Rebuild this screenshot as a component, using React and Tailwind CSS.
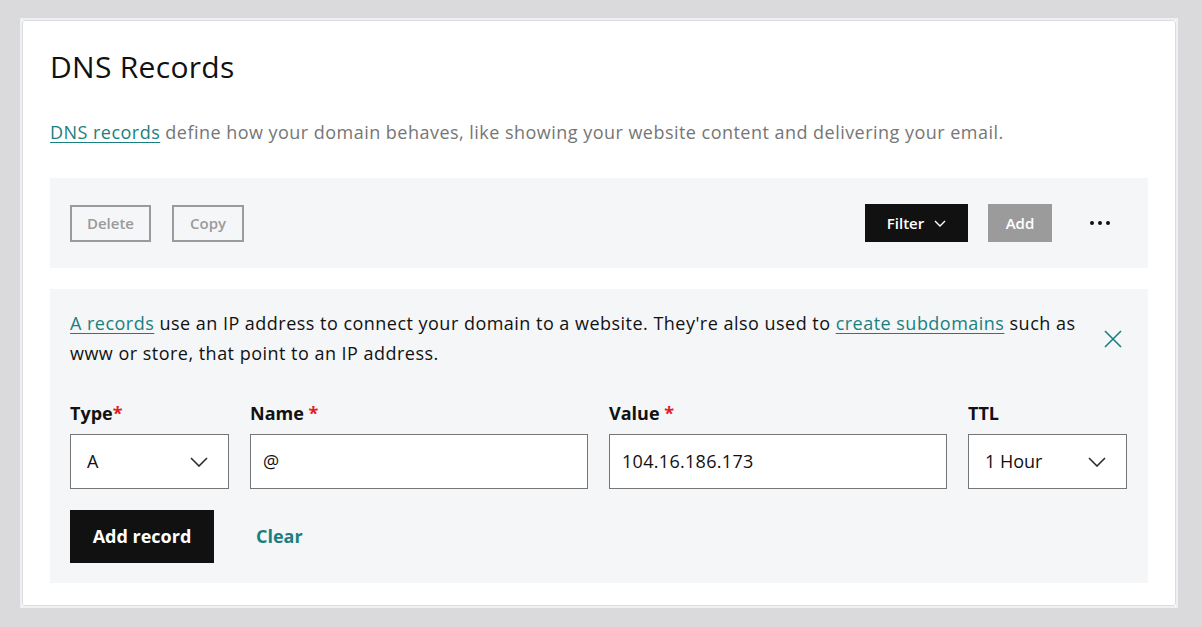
import React from "react";

const font = { fontFamily: "'Open Sans', 'Liberation Sans', sans-serif" };

function Chevron({ className = "" }) {
  return (
    <svg className={className} width="18" height="10" viewBox="0 0 18 10" fill="none">
      <path d="M1 1l8 8 8-8" stroke="#2b2b2b" strokeWidth="1.6" />
    </svg>
  );
}

export default function App() {
  return (
    <div className="min-h-[627px] bg-[#dadadc] pt-[18px] pl-[20px] pr-[24px]" style={font}>
      <div className="border-2 border-[#eef0f3] bg-white h-[590px]">
        <div className="h-full border border-[#d9dde2] rounded-[3px] px-[27px] pt-[27px]">
          <h1 className="text-[30px] leading-[38px] text-[#111] tracking-[0.3px]">DNS Records</h1>
          <p className="mt-[33px] text-[18px] leading-[26px] text-[#767676] tracking-[0.47px]">
            <a className="text-[#1a7f80] underline underline-offset-[3px]">DNS records</a>
            <span> define how your domain behaves, like showing your website content and delivering your email.</span>
          </p>
          <div className="mt-[33px] bg-[#f5f6f8] h-[90px] flex items-center pl-[20px]">
            <button className="h-[37px] w-[81px] border-2 border-[#9b9b9b] text-[#9b9b9b] text-[15px] font-semibold">Delete</button>
            <button className="ml-[21px] h-[37px] w-[72px] border-2 border-[#9b9b9b] text-[#9b9b9b] text-[15px] font-semibold">Copy</button>
            <div className="flex-1" />
            <button className="h-[38px] w-[103px] bg-[#111] text-white text-[15px] font-semibold flex items-center justify-center gap-[10px]">
              Filter
              <svg width="12" height="7" viewBox="0 0 12 7" fill="none"><path d="M1 1l5 5 5-5" stroke="white" strokeWidth="1.4" /></svg>
            </button>
            <button className="ml-[20px] h-[38px] w-[64px] bg-[#9b9b9b] text-white text-[15px] font-semibold">Add</button>
            <div className="w-[96px] flex justify-center">
              <svg width="20" height="4" viewBox="0 0 20 4"><circle cx="2" cy="2" r="2" fill="#111" /><circle cx="10" cy="2" r="2" fill="#111" /><circle cx="18" cy="2" r="2" fill="#111" /></svg>
            </div>
          </div>
          <div className="mt-[21px] bg-[#f5f6f8] h-[294px] px-[20px] pt-[19px]">
            <div className="flex">
              <p className="w-[1015px] text-[18px] leading-[30px] text-[#111] tracking-[0.48px]">
                <a className="text-[#1a7f80] underline underline-offset-[3px]">A records</a>
                <span> use an IP address to connect your domain to a website. They're also used to </span>
                <a className="text-[#1a7f80] underline underline-offset-[3px]">create subdomains</a>
                <span> such as </span>
                <span>www or store, that point to an IP address.</span>
              </p>
              <div className="pl-[19px] pt-[22px]">
                <svg width="18" height="18" viewBox="0 0 18 18"><path d="M1 1l16 16M17 1L1 17" stroke="#1a7f80" strokeWidth="1.6" /></svg>
              </div>
            </div>
            <div className="mt-[33px] flex gap-[21px]">
              <div className="w-[159px]">
                <div className="text-[18px] font-bold text-[#111] leading-[24px]">Type<span className="text-[#e02020]">*</span></div>
                <div className="mt-[9px] h-[55px] border border-[#767676] bg-white flex items-center justify-between pl-[16px] pr-[20px] text-[18px] text-[#111]">
                  A<Chevron />
                </div>
              </div>
              <div className="w-[338px]">
                <div className="text-[18px] font-bold text-[#111] leading-[24px]">Name <span className="text-[#e02020]">*</span></div>
                <div className="mt-[9px] h-[55px] border border-[#767676] bg-white flex items-center pl-[12px] text-[18px] text-[#111]">@</div>
              </div>
              <div className="w-[338px]">
                <div className="text-[18px] font-bold text-[#111] leading-[24px]">Value <span className="text-[#e02020]">*</span></div>
                <div className="mt-[9px] h-[55px] border border-[#767676] bg-white flex items-center pl-[12px] text-[18px] text-[#111] tracking-[0.3px]">104.16.186.173</div>
              </div>
              <div className="w-[159px]">
                <div className="text-[18px] font-bold text-[#111] leading-[24px]">TTL</div>
                <div className="mt-[9px] h-[55px] border border-[#767676] bg-white flex items-center justify-between pl-[16px] pr-[20px] text-[18px] text-[#111]">
                  1 Hour<Chevron />
                </div>
              </div>
            </div>
            <div className="mt-[21px] flex items-center">
              <button className="h-[53px] w-[144px] bg-[#111] text-white text-[18px] font-bold">Add record</button>
              <button className="ml-[42px] text-[#1a7f80] text-[18px] font-bold">Clear</button>
            </div>
          </div>
        </div>
      </div>
    </div>
  );
}
